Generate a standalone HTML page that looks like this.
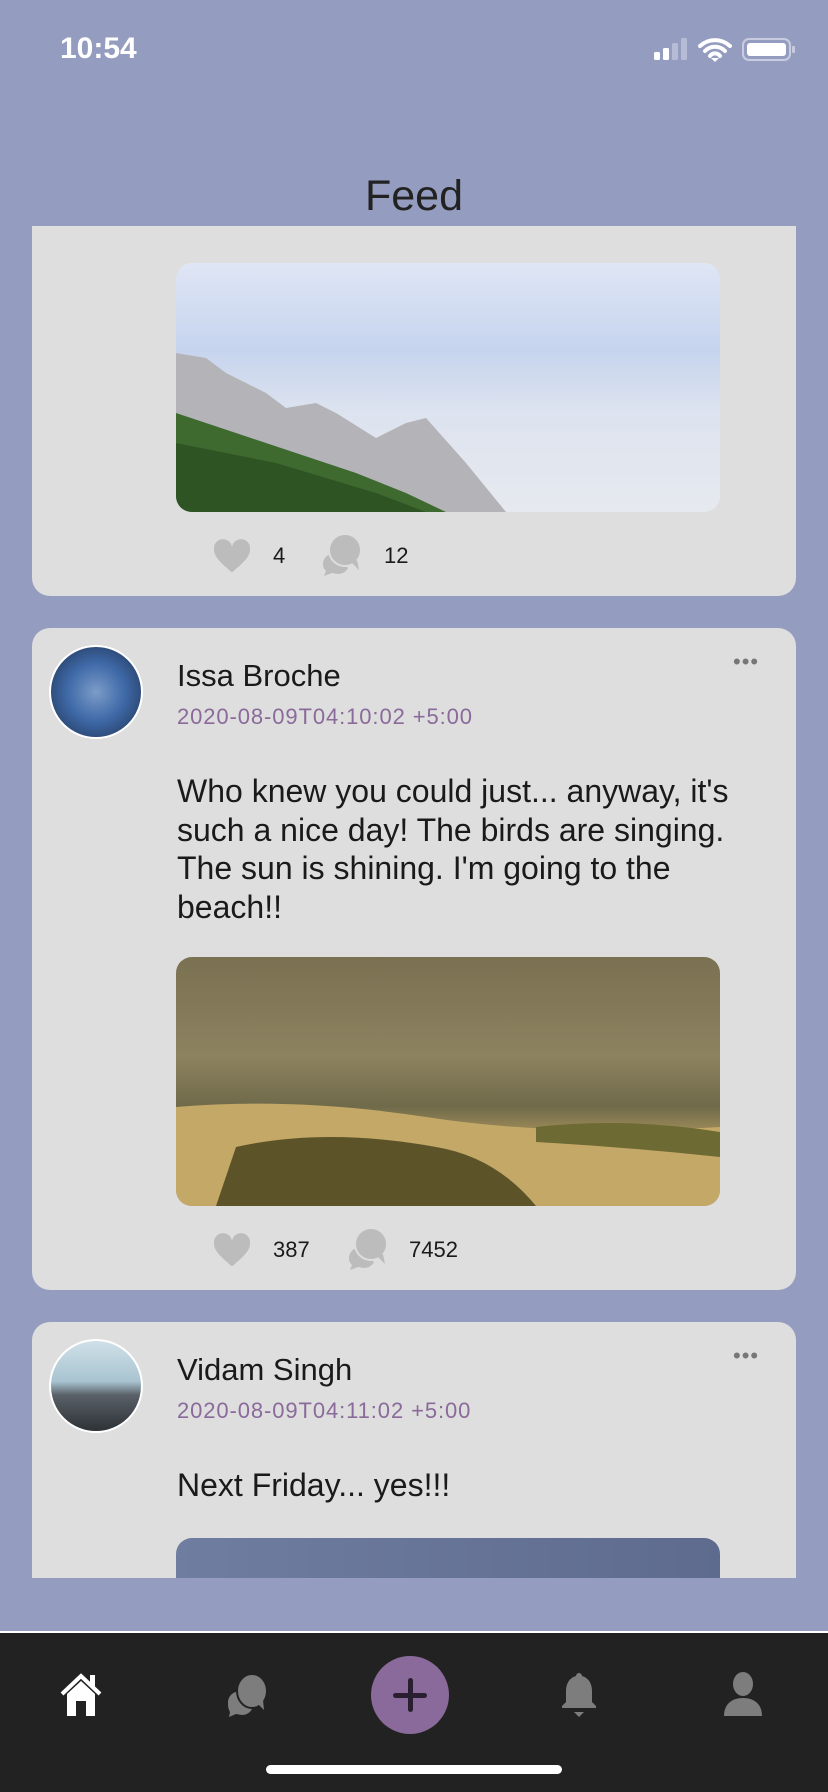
<!DOCTYPE html>
<html><head><meta charset="utf-8"><style>
*{margin:0;padding:0;box-sizing:border-box}
body{width:828px;height:1792px;background:#949cc0;position:relative;overflow:hidden;font-family:"Liberation Sans",sans-serif;color:#1a1a1a}
.abs{position:absolute}
.card{position:absolute;left:32px;width:764px;background:#dedede;border-radius:18px}
.img{position:absolute;left:176px;width:544px;height:249px;border-radius:16px;overflow:hidden}
.name{position:absolute;left:177px;font-size:31px}
.date{position:absolute;left:177px;font-size:22px;color:#8a6a9a;letter-spacing:0.9px}
.txt{position:absolute;left:177px;font-size:32px;line-height:38.5px;width:580px}
.cnt{position:absolute;font-size:22px}
.dots{position:absolute;left:733px;font-size:22px;color:#777;letter-spacing:1px}
.av{position:absolute;left:49px;width:94px;height:94px;border-radius:50%;border:2px solid #fff;overflow:hidden}
</style></head><body>
<div class="abs" style="left:60px;top:32px;color:#fff;font-size:30px;font-weight:600">10:54</div>
<svg class="abs" style="left:652px;top:36px" width="144" height="28" viewBox="0 0 144 28">
<rect x="2" y="16" width="6" height="8" rx="1.5" fill="#fff"/><rect x="11" y="12" width="6" height="12" rx="1.5" fill="#fff"/>
<rect x="20" y="7" width="6" height="17" rx="1.5" fill="#b6bbd6"/><rect x="29" y="2" width="6" height="22" rx="1.5" fill="#b6bbd6"/>
<path d="M48 10a22 22 0 0 1 30 0M53 15a14 14 0 0 1 20 0M58 20a6 6 0 0 1 10 0" stroke="#fff" stroke-width="4" fill="none" stroke-linecap="round"/><path d="M59 22l4 4 4-4z" fill="#fff"/>
<rect x="91" y="3" width="47" height="21" rx="6" fill="none" stroke="#c9cce0" stroke-width="2"/><rect x="95" y="7" width="39" height="13" rx="3" fill="#fff"/><rect x="140" y="10" width="3" height="7" rx="1" fill="#c9cce0"/>
</svg>
<div class="abs" style="left:0;width:828px;top:172px;text-align:center;font-size:43px;font-weight:300;color:#222">Feed</div>

<div class="abs" style="left:0;top:226px;width:828px;height:1352px;overflow:hidden">
 <div class="card" style="top:-140px;height:510px"></div>
 <div class="img" style="top:37px;background:linear-gradient(180deg,#dfe6f5 0%,#c6d4ee 35%,#dde3ef 60%,#e6e9ef 100%)">
  <svg width="544" height="249" viewBox="0 0 544 249"><path d="M0 90 L30 95 L50 110 L90 130 L110 145 L140 140 L160 150 L200 175 L230 160 L250 155 L290 200 L330 249 L0 249Z" fill="#b4b4b8"/><path d="M0 150 L60 170 L120 190 L180 210 L230 230 L270 249 L0 249Z" fill="#3e6a30"/><path d="M0 180 L100 200 L200 230 L250 249 L0 249Z" fill="#2e5424"/></svg>
 </div>
 <svg class="abs" style="left:212px;top:312px" width="40" height="36" viewBox="0 0 24 22"><path d="M12 21C5 15 1 11.5 1 7a5.5 5.5 0 0 1 11-1.5A5.5 5.5 0 0 1 23 7c0 4.5-4 8-11 14z" fill="#bcbcbc"/></svg>
 <div class="cnt" style="left:273px;top:317px">4</div>
 <svg class="abs" style="left:321px;top:306px" width="44" height="44" viewBox="0 0 44 44"><path d="M14 22a10 10 0 0 0-12 10c0 4 2 6 3 7l-2 5 8-3 6 1c4 0 8-2 10-6z" fill="#bcbcbc"/><circle cx="24" cy="18" r="16" fill="#bcbcbc" stroke="#dedede" stroke-width="2"/><path d="M30 30l8 8-2-10z" fill="#bcbcbc"/></svg>
 <div class="cnt" style="left:384px;top:317px">12</div>

 <div class="card" style="top:402px;height:662px"></div>
 <div class="av" style="top:419px;background:radial-gradient(circle at 50% 50%,#7b9cc8,#3f6aa8 45%,#1d2d4c 100%)"></div>
 <div class="name" style="top:432px">Issa Broche</div>
 <div class="date" style="top:478px">2020-08-09T04:10:02 +5:00</div>
 <div class="dots" style="top:423px">•••</div>
 <div class="txt" style="top:546px">Who knew you could just... anyway, it's such a nice day! The birds are singing. The sun is shining. I'm going to the beach!!</div>
 <div class="img" style="top:731px;background:linear-gradient(180deg,#7a7152 0%,#8d8260 40%,#6f6a4a 60%,#b39a5f 75%,#8e7a44 100%)">
  <svg width="544" height="249" viewBox="0 0 544 249"><path d="M0 150 Q120 140 250 160 T544 170 L544 249 L0 249Z" fill="#c4a867"/><path d="M60 190 Q150 170 260 190 Q320 200 360 249 L40 249Z" fill="#5c5428"/><path d="M360 170 Q450 160 544 175 L544 200 Q450 190 360 185Z" fill="#6d6a34"/></svg>
 </div>
 <svg class="abs" style="left:212px;top:1006px" width="40" height="36" viewBox="0 0 24 22"><path d="M12 21C5 15 1 11.5 1 7a5.5 5.5 0 0 1 11-1.5A5.5 5.5 0 0 1 23 7c0 4.5-4 8-11 14z" fill="#bcbcbc"/></svg>
 <div class="cnt" style="left:273px;top:1011px">387</div>
 <svg class="abs" style="left:347px;top:1000px" width="44" height="44" viewBox="0 0 44 44"><path d="M14 22a10 10 0 0 0-12 10c0 4 2 6 3 7l-2 5 8-3 6 1c4 0 8-2 10-6z" fill="#bcbcbc"/><circle cx="24" cy="18" r="16" fill="#bcbcbc" stroke="#dedede" stroke-width="2"/><path d="M30 30l8 8-2-10z" fill="#bcbcbc"/></svg>
 <div class="cnt" style="left:409px;top:1011px">7452</div>

 <div class="card" style="top:1096px;height:400px"></div>
 <div class="av" style="top:1113px;background:linear-gradient(180deg,#cfe0e8 0%,#a8c4d0 45%,#5a6068 60%,#2d3236 100%)"></div>
 <div class="name" style="top:1126px">Vidam Singh</div>
 <div class="date" style="top:1172px">2020-08-09T04:11:02 +5:00</div>
 <div class="dots" style="top:1117px">•••</div>
 <div class="txt" style="top:1240px">Next Friday... yes!!!</div>
 <div class="img" style="top:1312px;background:linear-gradient(90deg,#6f7da0,#5e6b8e)"></div>
</div>

<div class="abs" style="left:0;top:1631px;width:828px;height:2px;background:#fff"></div>
<div class="abs" style="left:0;top:1633px;width:828px;height:159px;background:#222"></div>
<svg class="abs" style="left:58px;top:1672px" width="46" height="44" viewBox="0 0 46 44"><path d="M4 22L23 4 42 22" stroke="#fff" stroke-width="4" fill="none"/><rect x="32" y="3" width="5" height="12" fill="#fff"/><path d="M9 22L23 9 37 22V44H28V29H18V44H9Z" fill="#fff"/></svg>
<svg class="abs" style="left:226px;top:1672px" width="44" height="46" viewBox="0 0 44 46"><path d="M14 20a10 11 0 0 0-12 12c0 4 1 6 2 8l-1 5 7-3 6 1c4 0 8-2 10-6z" fill="#7d7d7d"/><ellipse cx="26" cy="19" rx="15" ry="17" fill="#7d7d7d" stroke="#222" stroke-width="2"/><path d="M32 32l6 6-1-10z" fill="#7d7d7d"/></svg>
<div class="abs" style="left:371px;top:1656px;width:78px;height:78px;border-radius:50%;background:#8a6a9a"></div>
<div class="abs" style="left:393px;top:1693px;width:34px;height:5px;border-radius:3px;background:#2a1f30"></div>
<div class="abs" style="left:408px;top:1678px;width:5px;height:34px;border-radius:3px;background:#2a1f30"></div>
<svg class="abs" style="left:560px;top:1672px" width="38" height="46" viewBox="0 0 38 46"><path d="M19 1c2 0 3 2 3 3 7 2 10 8 10 15v11l4 4v2H2v-2l4-4V19c0-7 3-13 10-15 0-1 1-3 3-3z" fill="#7d7d7d"/><path d="M14 40h10l-5 5z" fill="#7d7d7d"/></svg>
<svg class="abs" style="left:723px;top:1672px" width="40" height="44" viewBox="0 0 40 44"><ellipse cx="20" cy="12" rx="10" ry="12" fill="#7d7d7d"/><path d="M1 44c0-12 8-18 19-18s19 6 19 18z" fill="#7d7d7d"/></svg>
<div class="abs" style="left:266px;top:1765px;width:296px;height:9px;border-radius:5px;background:#fff"></div>
</body></html>
